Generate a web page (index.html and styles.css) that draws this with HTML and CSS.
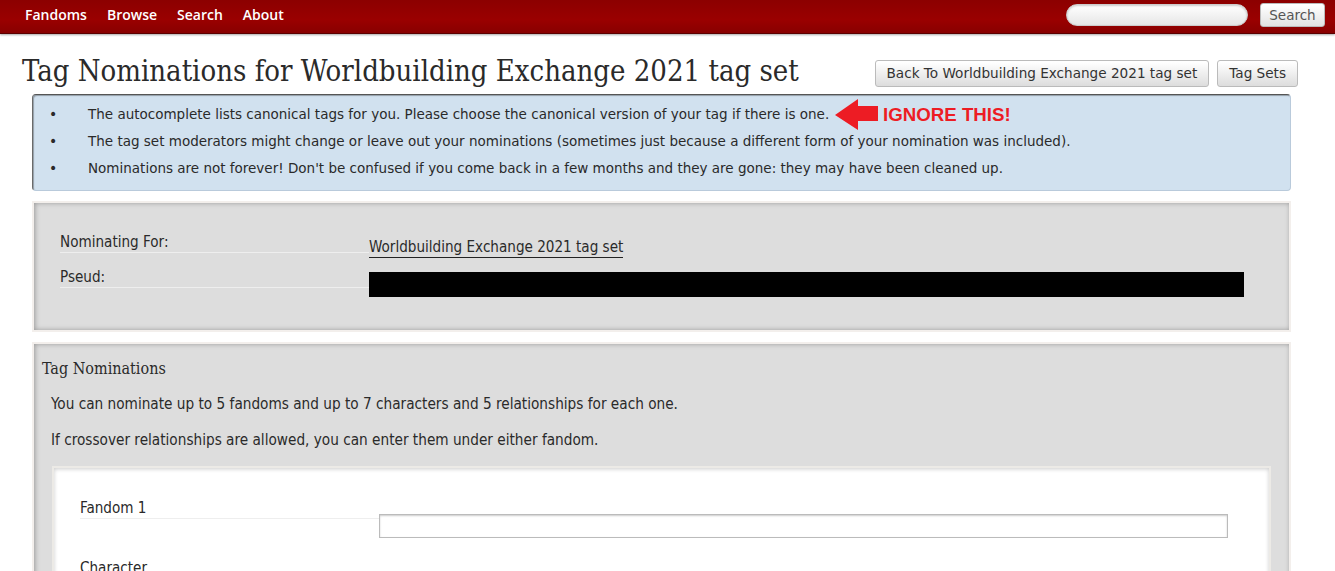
FILE: index.html
```html
<!DOCTYPE html>
<html lang="en">
<head>
<meta charset="utf-8">
<title>Tag Nominations</title>
<link rel="stylesheet" href="styles.css">
</head>
<body>
<header class="top">
  <nav class="primary">
    <ul class="menu">
      <li><a href="#">Fandoms</a></li>
      <li><a href="#">Browse</a></li>
      <li><a href="#">Search</a></li>
      <li><a href="#">About</a></li>
    </ul>
    <form class="search">
      <input class="search-input" type="text">
      <button class="search-btn" type="button">Search</button>
    </form>
  </nav>
</header>
<main class="main">
  <div class="title-row">
    <h2 class="heading">Tag Nominations for Worldbuilding Exchange 2021 tag set</h2>
    <ul class="actions">
      <li><a class="btn" href="#">Back To Worldbuilding Exchange 2021 tag set</a></li>
      <li><a class="btn" href="#">Tag Sets</a></li>
    </ul>
  </div>
  <div class="notice">
    <ul class="notice-list">
      <li>The autocomplete lists canonical tags for you. Please choose the canonical version of your tag if there is one.</li>
      <li>The tag set moderators might change or leave out your nominations (sometimes just because a different form of your nomination was included).</li>
      <li>Nominations are not forever! Don't be confused if you come back in a few months and they are gone: they may have been cleaned up.</li>
    </ul>
    <div class="annotation">
      <svg class="arrow" width="44" height="31" viewBox="0 0 44 31"><polygon points="0,16 23,0 23,7 43,7 43,22 23,22 23,31" fill="#ed1c24"/></svg>
      <span class="ignore">IGNORE THIS!</span>
    </div>
  </div>
  <fieldset class="box info">
    <dl class="meta">
      <dt>Nominating For:</dt>
      <dd><a class="set-link" href="#">Worldbuilding Exchange 2021 tag set</a></dd>
      <dt>Pseud:</dt>
      <dd><div class="redacted"></div></dd>
    </dl>
  </fieldset>
  <fieldset class="box noms">
    <h3 class="sub">Tag Nominations</h3>
    <p class="para">You can nominate up to 5 fandoms and up to 7 characters and 5 relationships for each one.</p>
    <p class="para">If crossover relationships are allowed, you can enter them under either fandom.</p>
    <div class="inner">
      <dl class="meta form">
        <dt>Fandom 1</dt>
        <dd><input class="field" type="text"></dd>
        <dt>Character</dt>
        <dd></dd>
      </dl>
    </div>
  </fieldset>
</main>
</body>
</html>
```

FILE: styles.css
```css
html, body { margin: 0; padding: 0; }
body {
  background: #fff;
  color: #2a2a2a;
  font-family: "DejaVu Sans", Verdana, sans-serif;
  font-size: 13px;
  overflow: hidden;
}
ul { list-style: none; margin: 0; padding: 0; }
a { color: inherit; text-decoration: none; }

.top {
  height: 33px;
  background: linear-gradient(#8c0000, #9a0000 60%, #880000);
  border-bottom: 1px solid #5a0000;
  box-shadow: 0 1px 2px rgba(0,0,0,0.35);
}
.primary {
  display: flex;
  justify-content: space-between;
  align-items: flex-start;
  height: 33px;
  padding: 0 10px 0 15px;
}
.menu { display: flex; }
.menu li a {
  display: block;
  color: #fff;
  font-family: "Open Sans", sans-serif;
  font-weight: 600;
  font-size: 14px;
  padding: 0 10px;
  line-height: 30px;
}
.search { display: flex; align-items: flex-start; gap: 12px; padding-top: 3px; }
.search-input {
  width: 182px;
  height: 22px;
  box-sizing: border-box;
  margin: 1px 0 0;
  border: 1px solid #ccc;
  border-radius: 11px;
  background: linear-gradient(#fff, #e6e6e6);
  box-shadow: inset 0 1px 2px rgba(0,0,0,0.2);
  padding: 0;
}
.search-btn {
  height: 24px;
  width: 65px;
  margin: 0;
  font-family: "DejaVu Sans", sans-serif;
  font-size: 13.5px;
  color: #555;
  background: linear-gradient(#fff 5%, #e2e2e2);
  border: 1px solid #bbb;
  border-radius: 3px;
  padding: 0;
}

.main { padding: 0 37px 0 22px; }
.title-row {
  display: flex;
  justify-content: space-between;
  align-items: flex-start;
  padding-top: 19px;
  height: 36px;
}
.heading {
  margin: 0;
  font-family: "DejaVu Serif Condensed", "DejaVu Serif", Georgia, serif;
  font-weight: normal;
  font-size: 29px;
  line-height: 36px;
  color: #2a2a2a;
  white-space: nowrap;
}
.actions { display: flex; gap: 8px; margin-top: 7px; }
.btn {
  display: block;
  height: 25px;
  line-height: 25px;
  padding: 0 11px;
  border: 1px solid #bbb;
  border-radius: 3px;
  background: linear-gradient(#fff 5%, #ddd);
  color: #333;
  font-size: 13.6px;
  white-space: nowrap;
}

.notice {
  position: relative;
  margin: 5px 7px 0 10px;
  height: 95px;
  background: #d1e1ef;
  border: 1px solid #b9cadb;
  border-top-color: #555;
  border-left-color: #6a6a6a;
  border-radius: 4px;
  box-shadow: inset 1px 1px 1px rgba(0,0,0,0.3);
  padding: 0;
}
.notice-list { padding: 6px 0 0 16px; }
.notice-list li {
  line-height: 27px;
  font-size: 13.5px;
  white-space: nowrap;
}
.notice-list li::before {
  content: "\2022";
  display: inline-block;
  width: 39px;
  font-size: 14px;
}
.annotation {
  position: absolute;
  left: 802px;
  top: 4px;
  display: flex;
  align-items: center;
  gap: 4px;
}
.ignore {
  color: #ed1c24;
  font-family: "Liberation Sans", Arial, sans-serif;
  font-weight: bold;
  font-size: 18.7px;
}

.box {
  margin: 0 7px 0 10px;
  background: #ddd;
  border: 2px solid #f3efec;
  box-shadow: inset 1px 0 5px #999;
  min-width: 0;
}
.info {
  margin-top: 10px;
  padding: 29px 45px 31px 26px;
  height: 67px;
}
.meta {
  display: grid;
  grid-template-columns: 309px 1fr;
  row-gap: 9px;
  margin: 0;
  font-family: "DejaVu Sans Condensed", "DejaVu Sans", sans-serif;
  font-size: 15.1px;
}
.meta dt {
  line-height: 20px;
  border-bottom: 1px solid #eee;
  align-self: start;
}
.meta dd {
  margin: 0;
  padding-top: 5px;
}
.set-link {
  display: inline-block;
  line-height: 20px;
  border-bottom: 1px solid #222;
}
.redacted { height: 25px; background: #000; }

.noms {
  margin-top: 10px;
  padding: 15px 18px 0 8px;
  height: 300px;
}
.sub {
  margin: 0;
  font-family: "DejaVu Serif Condensed", "DejaVu Serif", Georgia, serif;
  font-weight: normal;
  font-size: 16px;
  line-height: 20px;
}
.para {
  margin: 15px 0 0 9px;
  line-height: 20px;
  font-family: "DejaVu Sans Condensed", "DejaVu Sans", sans-serif;
  font-size: 15.2px;
}
.para + .para { margin-top: 16px; }
.inner {
  margin: 16px 0 0 10px;
  background: #fff;
  border: 2px solid #eceae6;
  box-shadow: inset 0 1px 4px #ccc;
  padding: 30px 41px 0 26px;
  height: 200px;
}
.form { grid-template-columns: 299px 1fr; row-gap: 20px; }
.form dd { padding-top: 16px; }
.field {
  display: block;
  box-sizing: border-box;
  width: 100%;
  height: 24px;
  margin: 0;
  border: 1px solid #bbb;
  box-shadow: inset 0 1px 2px #ccc;
  background: #fff;
}
```
